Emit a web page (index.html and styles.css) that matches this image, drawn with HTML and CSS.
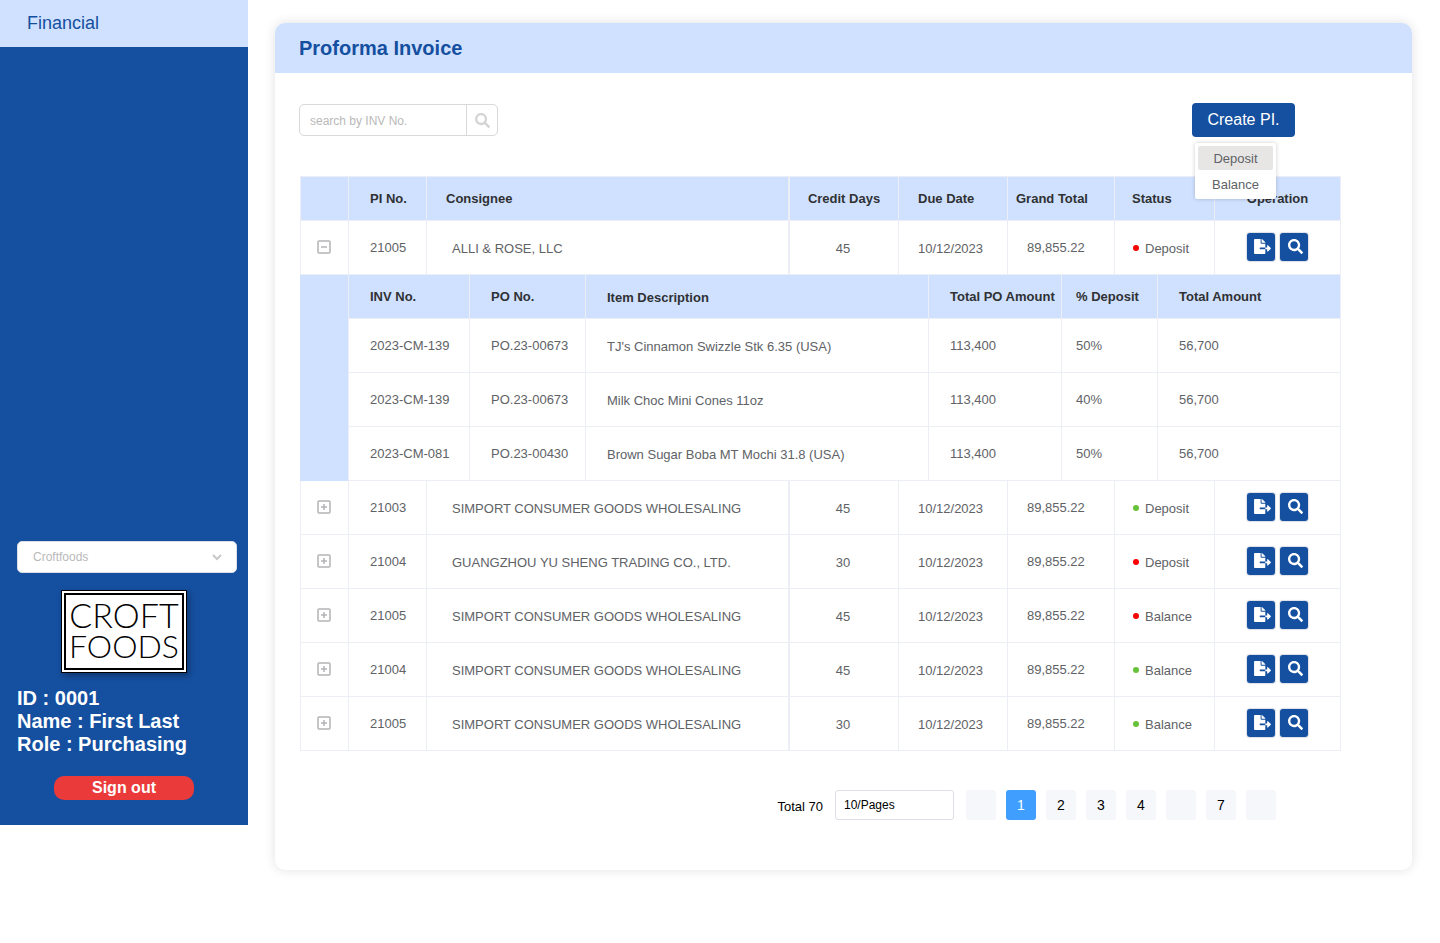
FILE: index.html
```html
<!DOCTYPE html>
<html lang="en">
<head>
    <meta charset="UTF-8">
    <meta name="viewport" content="width=device-width, initial-scale=1.0">
    <title>Proforma Invoice</title>
    <link rel="stylesheet" href="styles.css">
</head>
<body>
    <svg class="sprite" aria-hidden="true">
        <symbol id="icon-search" viewBox="0 0 512 512">
            <path d="M505 442.7L405.3 343c-4.5-4.5-10.6-7-17-7H372c27.6-35.3 44-79.7 44-128C416 93.1 322.9 0 208 0S0 93.1 0 208s93.1 208 208 208c48.3 0 92.7-16.4 128-44v16.3c0 6.4 2.5 12.5 7 17l99.7 99.7c9.4 9.4 24.6 9.4 33.9 0l28.3-28.3c9.4-9.4 9.4-24.6.1-34zM208 336c-70.7 0-128-57.2-128-128 0-70.7 57.2-128 128-128 70.7 0 128 57.2 128 128 0 70.7-57.2 128-128 128z"/>
        </symbol>
        <symbol id="icon-export" viewBox="0 0 576 512">
            <path d="M384 121.9c0-6.3-2.5-12.4-7-16.9L279.1 7c-4.5-4.5-10.6-7-17-7H256v128h128v-6.1zM571 308l-95.7-96.4c-10.1-10.1-27.4-3-27.4 11.3V288h-64v64h64v65.2c0 14.3 17.3 21.4 27.4 11.3L571 332c6.6-6.6 6.6-17.4 0-24zm-379 28v-32c0-8.8 7.2-16 16-16h176V160H248c-13.2 0-24-10.8-24-24V0H24C10.7 0 0 10.7 0 24v464c0 13.3 10.7 24 24 24h336c13.3 0 24-10.7 24-24V352H208c-8.8 0-16-7.2-16-16z"/>
        </symbol>
    </svg>

    <aside class="sidebar">
        <nav>
            <a class="nav-link" href="#">Financial</a>
        </nav>
        <div class="sidebar-bottom">
            <select class="company-select" aria-label="Company">
                <option>Croftfoods</option>
            </select>
            <div class="logo">
                <div class="logo-frame">
                    <span class="logo-top">CROFT</span>
                    <span class="logo-bottom">FOODS</span>
                </div>
            </div>
            <p class="user-info">ID : 0001<br>Name : First Last<br>Role : Purchasing</p>
            <button class="sign-out" type="button">Sign out</button>
        </div>
    </aside>

    <main class="card">
        <h1 class="card-title">Proforma Invoice</h1>
        <div class="card-body">
            <div class="toolbar">
                <form class="search">
                    <input type="text" placeholder="search by INV No." aria-label="search by INV No.">
                    <button type="button" aria-label="Search"><svg><use href="#icon-search"/></svg></button>
                </form>
                <div class="create">
                    <button class="create-btn" type="button">Create PI.</button>
                    <div class="create-menu">
                        <button class="active" type="button">Deposit</button>
                        <button type="button">Balance</button>
                    </div>
                </div>
            </div>

            <table class="pi-table">
                <colgroup>
                    <col class="col-toggle"><col class="col-pi"><col><col class="col-credit">
                    <col class="col-due"><col class="col-grand"><col class="col-status"><col class="col-operation">
                </colgroup>
                <thead>
                    <tr>
                        <th></th>
                        <th>PI No.</th>
                        <th class="consignee">Consignee</th>
                        <th class="center">Credit Days</th>
                        <th class="due">Due Date</th>
                        <th class="grand">Grand Total</th>
                        <th class="status">Status</th>
                        <th class="center">Operation</th>
                    </tr>
                </thead>
                <tbody id="pi-rows"></tbody>
            </table>

            <div class="pagination">
                <span class="total">Total 70</span>
                <select class="page-size" aria-label="Page size">
                    <option>10/Pages</option>
                </select>
                <button type="button" aria-label="Previous"></button>
                <button class="active" type="button">1</button>
                <button type="button">2</button>
                <button type="button">3</button>
                <button type="button">4</button>
                <button type="button" aria-label="More"></button>
                <button type="button">7</button>
                <button type="button" aria-label="Next"></button>
            </div>
        </div>
    </main>

    <script src="script.js"></script>
</body>
</html>
```
FILE: styles.css
```css
* {
  box-sizing: border-box;
}
body {
  margin: 0;
  min-height: 100vh;
  display: flex;
  align-items: flex-start;
  background: #fff;
  font-family: "Liberation Sans", Arial, sans-serif;
  font-size: 13px;
  color: #606266;
}
button, input, select {
  font-family: inherit;
}
button {
  border: none;
  padding: 0;
  cursor: pointer;
}
.sprite {
  display: none;
}

/* sidebar */
.sidebar {
  flex: 0 0 248px;
  min-height: calc(100vh - 118px);
  display: flex;
  flex-direction: column;
  background: #154f9f;
}
.nav-link {
  display: block;
  padding: 0 27px;
  line-height: 47px;
  font-size: 18px;
  color: #154f9f;
  background: #cfe1ff;
  text-decoration: none;
}
.sidebar-bottom {
  margin-top: auto;
  padding-bottom: 25px;
  display: flex;
  flex-direction: column;
}
.company-select {
  appearance: none;
  height: 32px;
  margin: 0 11px 0 17px;
  padding: 0 15px;
  border: 1px solid #dcdfe6;
  border-radius: 5px;
  font-size: 12px;
  color: #b9b9b9;
  background: #fff url("data:image/svg+xml,%3Csvg xmlns='http://www.w3.org/2000/svg' width='10' height='7' fill='none' stroke='%23c8c8c8' stroke-width='2'%3E%3Cpath d='M1 1l4 4 4-4'/%3E%3C/svg%3E") no-repeat right 14px center;
}
.logo {
  align-self: center;
  margin: 17px 0 14px;
  padding: 2px;
  border: 1px solid #000;
  background: #fff;
  box-shadow: 2px 3px 6px rgba(0, 0, 0, 0.3);
}
.logo-frame {
  display: flex;
  flex-direction: column;
  align-items: center;
  width: 120px;
  height: 77px;
  padding-top: 4px;
  border: 2px solid #000;
  font-family: Lato, sans-serif;
  font-weight: 300;
  line-height: 31px;
  color: #000;
}
.logo-top {
  font-size: 34px;
}
.logo-bottom {
  font-size: 32px;
}
.user-info {
  margin: 0 17px 20px;
  font-size: 20px;
  font-weight: bold;
  line-height: 23px;
  color: #fff;
}
.sign-out {
  align-self: center;
  width: 140px;
  height: 24px;
  border-radius: 10px;
  font-size: 16px;
  font-weight: bold;
  color: #fff;
  background: #eb3a3a;
}

/* card */
.card {
  flex: 1;
  min-width: 0;
  margin: 23px 28px 23px 27px;
  border-radius: 10px;
  background: #fff;
  box-shadow: 0 0 12px rgba(0, 0, 0, 0.12);
}
.card-title {
  margin: 0;
  padding: 0 24px;
  border-radius: 10px 10px 0 0;
  font-size: 20px;
  line-height: 50px;
  color: #154f9f;
  background: #cfe1ff;
}
.card-body {
  padding: 30px 71px 50px 24px;
}
.toolbar {
  display: flex;
  justify-content: space-between;
  align-items: center;
  margin-bottom: 39px;
  padding-right: 46px;
}
.search {
  display: flex;
  width: 199px;
  height: 32px;
  border: 1px solid #d9d9d9;
  border-radius: 5px;
}
.search input {
  flex: 1;
  min-width: 0;
  padding: 2px 10px 0;
  border: none;
  background: none;
  font-size: 12px;
}
.search input::placeholder {
  color: #b9b9b9;
}
.search button {
  width: 31px;
  border-left: 1px solid #d9d9d9;
  background: none;
  line-height: 0;
}
.search svg {
  width: 15px;
  height: 15px;
  fill: #d5d5d5;
}
.create {
  position: relative;
}
.create-btn {
  width: 103px;
  height: 34px;
  border-radius: 4px;
  font-size: 16px;
  color: #fff;
  background: #154f9f;
}
.create-menu {
  position: absolute;
  top: 40px;
  left: 3px;
  width: 81px;
  padding: 3px 3px 1px;
  border-radius: 2px;
  background: #fff;
  box-shadow: 0 0 4px rgba(0, 0, 0, 0.2);
}
.create-menu button {
  display: block;
  width: 100%;
  height: 24px;
  margin-bottom: 2px;
  border-radius: 2px;
  font-size: 13px;
  color: #606266;
  background: #fff;
}
.create-menu button.active {
  background: #e7e6e5;
}

/* tables */
table {
  width: 100%;
  table-layout: fixed;
  border-collapse: separate;
  border-spacing: 0;
}
.pi-table {
  width: calc(100% - 1px);
  margin-left: 1px;
}
th, td {
  height: 54px;
  padding: 0 0 0 21px;
  border: solid #ebeef5;
  border-width: 0 1px 1px 0;
  text-align: left;
}
th {
  height: 44px;
  color: #303133;
  background: #cfe1ff;
  white-space: nowrap;
}
.pi-table > thead th {
  height: 45px;
  border-top-width: 1px;
}
.pi-table > thead th:first-child,
.pi-table > tbody > tr > td:first-child {
  padding: 0 2px 2px 0;
  border-left-width: 1px;
  text-align: center;
}
.col-toggle { width: 49px; }
.col-pi { width: 78px; }
.col-credit, .col-due { width: 109px; }
.col-grand { width: 107px; }
.col-status { width: 100px; }
.col-operation { width: 126px; }
.col-inv { width: 121px; }
.col-po { width: 116px; }
.col-amount { width: 133px; }
.col-percent { width: 96px; }
.col-total { width: 183px; }

th.consignee, td.consignee {
  border-right-width: 2px;
}
th.center, td.center {
  padding: 0;
  text-align: center;
}
td.consignee, td.days, td.due, td.status, .description {
  padding-top: 2px;
}
th.consignee, td.due, th.due { padding-left: 19px; }
td.consignee { padding-left: 25px; }
th.grand { padding-left: 8px; }
td.grand { padding-left: 19px; }
th.status, td.status { padding-left: 17px; }
.percent { padding-left: 14px; }
td.days { padding-right: 2px; }
td.operation { padding-bottom: 2px; }
.pi-table > tbody > tr > td.spacer {
  border: none;
  border-right: 1px solid #ebeef5;
  background: #cfe1ff;
}
td.nested {
  padding: 0;
  border: none;
}
.toggle {
  width: 14px;
  height: 14px;
  background: none;
  line-height: 0;
  vertical-align: middle;
}
.toggle svg {
  width: 14px;
  height: 14px;
  fill: none;
  stroke: #b4b4b8;
}
.dot {
  display: inline-block;
  width: 6px;
  height: 6px;
  margin: 0 6px 2px 1px;
  border-radius: 50%;
  background: #67c23a;
}
.dot.red {
  background: #f00;
}
.actions {
  display: flex;
  justify-content: center;
  gap: 5px;
}
.actions button {
  display: flex;
  align-items: center;
  justify-content: center;
  width: 28px;
  height: 28px;
  padding-left: 2px;
  border-radius: 3px;
  background: #154f9f;
  box-shadow: 0 0 1px 1px #dcdfe6;
}
.actions svg {
  width: 17px;
  height: 15px;
  fill: #fff;
}

/* pagination */
.pagination {
  display: flex;
  justify-content: flex-end;
  align-items: center;
  gap: 10px;
  margin-top: 39px;
  padding-right: 65px;
  color: #000;
}
.total {
  padding-top: 2px;
}
.page-size {
  appearance: none;
  width: 119px;
  height: 30px;
  margin: 0 2px;
  padding: 0 8px;
  border: 1px solid #dcdfe6;
  border-radius: 3px;
  font-size: 12px;
  color: #000;
  background: #fff;
}
.pagination button {
  width: 30px;
  height: 30px;
  border-radius: 3px;
  font-size: 14px;
  color: #000;
  background: #f5f7fa;
}
.pagination button.active {
  color: #fff;
  background: #409eff;
}
```
FILE: script.js
```js
const piRows = document.getElementById('pi-rows');

const invoices = [
    { no: '21005', consignee: 'ALLI &amp; ROSE, LLC', days: 45, status: 'Deposit', color: 'red', open: true },
    { no: '21003', consignee: 'SIMPORT CONSUMER GOODS WHOLESALING', days: 45, status: 'Deposit', color: 'green' },
    { no: '21004', consignee: 'GUANGZHOU YU SHENG TRADING CO., LTD.', days: 30, status: 'Deposit', color: 'red' },
    { no: '21005', consignee: 'SIMPORT CONSUMER GOODS WHOLESALING', days: 45, status: 'Balance', color: 'red' },
    { no: '21004', consignee: 'SIMPORT CONSUMER GOODS WHOLESALING', days: 45, status: 'Balance', color: 'green' },
    { no: '21005', consignee: 'SIMPORT CONSUMER GOODS WHOLESALING', days: 30, status: 'Balance', color: 'green' }
];

const items = [
    { inv: '2023-CM-139', po: 'PO.23-00673', description: "TJ's Cinnamon Swizzle Stk 6.35 (USA)", percent: '50%' },
    { inv: '2023-CM-139', po: 'PO.23-00673', description: 'Milk Choc Mini Cones 11oz', percent: '40%' },
    { inv: '2023-CM-081', po: 'PO.23-00430', description: 'Brown Sugar Boba MT Mochi 31.8 (USA)', percent: '50%' }
];

function nestedRow() {
    const rows = items.map(item => `
                    <tr>
                        <td>${item.inv}</td>
                        <td>${item.po}</td>
                        <td class="description">${item.description}</td>
                        <td>113,400</td>
                        <td class="percent">${item.percent}</td>
                        <td>56,700</td>
                    </tr>`).join('');
    return `
    <tr>
        <td class="spacer"></td>
        <td class="nested" colspan="7">
            <table>
                <colgroup>
                    <col class="col-inv"><col class="col-po"><col>
                    <col class="col-amount"><col class="col-percent"><col class="col-total">
                </colgroup>
                <thead>
                    <tr>
                        <th>INV No.</th>
                        <th>PO No.</th>
                        <th class="description">Item Description</th>
                        <th>Total PO Amount</th>
                        <th class="percent">% Deposit</th>
                        <th>Total Amount</th>
                    </tr>
                </thead>
                <tbody>${rows}</tbody>
            </table>
        </td>
    </tr>`;
}

function displayInvoices() {
    piRows.innerHTML = invoices.map((pi, index) => `
    <tr>
        <td>
            <button class="toggle" type="button" aria-label="Toggle" onclick="toggleRow(${index})">
                <svg viewBox="0 0 14 14" stroke-width="1.5"><rect x="1" y="1" width="12" height="12" rx="1"/><path d="M4 7h6${pi.open ? '' : 'M7 4v6'}"/></svg>
            </button>
        </td>
        <td>${pi.no}</td>
        <td class="consignee">${pi.consignee}</td>
        <td class="center days">${pi.days}</td>
        <td class="due">10/12/2023</td>
        <td class="grand">89,855.22</td>
        <td class="status"><span class="dot ${pi.color}"></span>${pi.status}</td>
        <td class="center operation">
            <div class="actions">
                <button type="button" aria-label="Export"><svg><use href="#icon-export"/></svg></button>
                <button type="button" aria-label="View"><svg><use href="#icon-search"/></svg></button>
            </div>
        </td>
    </tr>${pi.open ? nestedRow() : ''}`).join('');
}

function toggleRow(index) {
    invoices[index].open = !invoices[index].open;
    displayInvoices();
}

displayInvoices();
```
